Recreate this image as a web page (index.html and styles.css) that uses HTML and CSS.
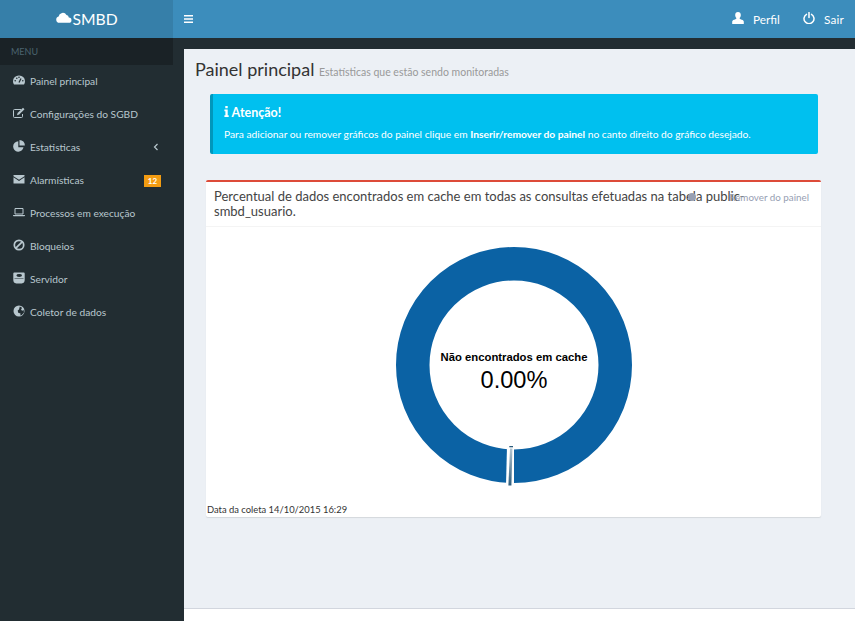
FILE: index.html
```html
<!DOCTYPE html>
<html lang="pt-BR">
<head>
    <meta charset="UTF-8">
    <meta name="viewport" content="width=device-width, initial-scale=1.0">
    <link rel="stylesheet" href="styles.css">
    <title>SMBD</title>
</head>
<body>
    <header class="topbar">
        <a class="logo">
            <svg class="logo-cloud" viewBox="0 0 16 10"><path d="M4 10a3 3 0 0 1-.6-5.900A4 4 0 0 1 10.800 2.600 2.800 2.800 0 0 1 13 5a2.500 2.500 0 0 1 0 5z" fill="#fff"/></svg>
            <span>SMBD</span>
        </a>
        <nav class="topnav">
            <svg class="burger" viewBox="0 0 10 8"><path d="M0 0h9v1.600H0zM0 3.200h9v1.600H0zM0 6.400h9V8H0z" fill="#fff"/></svg>
            <div class="topnav-right">
                <a class="toplink">
                    <svg viewBox="0 0 12 12"><path d="M6 0c1.800 0 2.800 1.300 2.800 3.100 0 1.200-.5 2.300-1.200 3 0 .7.300 1 1 1.200 1.600.5 3 1 3.200 2.200V12H.2v-2.500C.4 8.300 1.800 7.800 3.400 7.300c.7-.2 1-.5 1-1.200-.7-.7-1.200-1.800-1.200-3C3.200 1.300 4.200 0 6 0z" fill="#fff"/></svg>
                    Perfil
                </a>
                <a class="toplink">
                    <svg viewBox="0 0 12 12"><path d="M3.500 2.300a5 5 0 1 0 5 0M6 .5v5" fill="none" stroke="#fff" stroke-width="1.500" stroke-linecap="round"/></svg>
                    Sair
                </a>
            </div>
        </nav>
    </header>

    <div class="wrapper">
        <aside class="sidebar">
            <div class="sidebar-head">MENU</div>
            <ul class="menu">
                <li>
                    <svg viewBox="0 0 12 12"><path d="M6 1.500a5.800 5.800 0 0 0-6 5.700c0 1.200.3 2.200 1 3.300h10c.7-1.100 1-2.100 1-3.300a5.800 5.800 0 0 0-6-5.700z" fill="#b8c7ce"/><path d="M6 8.500 8 4.500" stroke="#222d32" stroke-width="1.200"/><circle cx="2.200" cy="6.800" r=".8" fill="#222d32"/><circle cx="3.800" cy="4.200" r=".8" fill="#222d32"/><circle cx="6" cy="3.300" r=".8" fill="#222d32"/><circle cx="9.800" cy="6.800" r=".8" fill="#222d32"/></svg>
                    Painel principal
                </li>
                <li>
                    <svg viewBox="0 0 12 12"><path d="M8 2.500H1.500a1 1 0 0 0-1 1v6a1 1 0 0 0 1 1h7a1 1 0 0 0 1-1V7" fill="none" stroke="#b8c7ce" stroke-width="1"/><path d="M4 8.200 4.600 6 10 .8l1.500 1.500L6.200 7.600z" fill="#b8c7ce"/></svg>
                    Configurações do SGBD
                </li>
                <li class="has-arrow">
                    <svg viewBox="0 0 12 12"><path d="M5.300 1.300a5.200 5.200 0 1 0 5.200 5.900H5.300z" fill="#b8c7ce"/><path d="M6.500 0a5.400 5.400 0 0 1 5.400 5.500H6.500z" fill="#b8c7ce"/></svg>
                    Estatisticas
                    <svg class="arrow" viewBox="0 0 6 8"><path d="M4.500 1 1.500 4l3 3" fill="none" stroke="#b8c7ce" stroke-width="1.200"/></svg>
                </li>
                <li class="has-badge">
                    <svg viewBox="0 0 12 12"><path d="M.5 2h11v1.200L6 6.800.5 3.200z" fill="#b8c7ce"/><path d="M.5 4.300 6 8l5.500-3.700V10.500H.5z" fill="#b8c7ce"/></svg>
                    Alarmísticas
                    <span class="badge">12</span>
                </li>
                <li>
                    <svg viewBox="0 0 12 12"><path d="M2 2.500h8v5.500H2z" fill="none" stroke="#b8c7ce" stroke-width="1"/><path d="M0 9h12v.6l-.6.6H.6L0 9.600z" fill="#b8c7ce"/></svg>
                    Processos em execução
                </li>
                <li>
                    <svg viewBox="0 0 12 12"><circle cx="6" cy="6" r="4.700" fill="none" stroke="#b8c7ce" stroke-width="1.700"/><path d="M2.800 9.200 9.200 2.800" stroke="#b8c7ce" stroke-width="1.700"/></svg>
                    Bloqueios
                </li>
                <li>
                    <svg viewBox="0 0 12 12"><path d="M1.300.5h9.400a1 1 0 0 1 1 1v6.500a3.500 3.500 0 0 1-3 3.500H3.300a3.500 3.500 0 0 1-3-3.500V1.500a1 1 0 0 1 1-1z" fill="#b8c7ce"/><ellipse cx="6.200" cy="3.500" rx="2.800" ry="1.400" fill="#222d32"/><path d="M1.500 6.500h9" stroke="#222d32" stroke-width=".5"/></svg>
                    Servidor
                </li>
                <li>
                    <svg viewBox="0 0 12 12"><circle cx="6" cy="6" r="5.500" fill="#b8c7ce"/><path d="M6.800 1.500 9 2.700 8 5 9.800 5.700 10.600 4.800 11 7.500 8.800 10 7.300 10.500 7.500 8.500 5.200 7.800 4.700 5.500 6 4.500z" fill="#222d32"/></svg>
                    Coletor de dados
                </li>
            </ul>
        </aside>

        <div class="main">
            <section class="content">
                <h1 class="page-title">Painel principal <small>Estatísticas que estão sendo monitoradas</small></h1>

                <div class="alert">
                    <h4><svg viewBox="0 0 5 11"><path d="M1.300 0h2.400v2.200H1.300zM.4 3.500h3.300v5.700h1V11H.4V9.200h1V5.300h-1z" fill="#fff"/></svg> Atenção!</h4>
                    <p>Para adicionar ou remover gráficos do painel clique em <b>Inserir/remover do painel</b> no canto direito do gráfico desejado.</p>
                </div>

                <div class="box">
                    <div class="box-header">
                        <h3>Percentual de dados encontrados em cache em todas as consultas efetuadas na tabela public-smbd_usuario.</h3>
                        <a class="box-tool"><span class="tool-icon"></span>Remover do painel</a>
                    </div>
                    <div class="box-body">
                        <svg class="donut" viewBox="0 0 240 240">
                            <defs>
                                <linearGradient id="sliver" x1="0" y1="0" x2="0" y2="1">
                                    <stop offset="0" stop-color="#b5c6d2"/>
                                    <stop offset="1" stop-color="#2c5c7c"/>
                                </linearGradient>
                            </defs>
                            <circle cx="120" cy="119" r="101.250" fill="none" stroke="#0b62a4" stroke-width="33.500"/>
                            <path d="M113 200 120 200 120 239 112 239z" fill="#fff"/>
                            <path d="M116 202.500h2.400l-1 37h-3z" fill="url(#sliver)"/>
                            <path d="M115.300 200h3.700v1.300h-3.700z" fill="#2c5c7c"/>
                            <text class="donut-label" x="120" y="114.500" text-anchor="middle">Não encontrados em cache</text>
                            <text class="donut-value" x="120" y="142" text-anchor="middle">0.00%</text>
                        </svg>
                    </div>
                    <div class="box-foot">Data da coleta 14/10/2015 16:29</div>
                </div>
            </section>
            <footer class="footer"></footer>
        </div>
    </div>
</body>
</html>
```

FILE: styles.css
```css
* {
    box-sizing: border-box;
}

html, body {
    height: 100%;
}

body {
    margin: 0;
    overflow: hidden;
    font-family: "Lato", "Open Sans", sans-serif;
    background-color: #222d32;
    color: #333;
    display: flex;
    flex-direction: column;
}

/* top bar */
.topbar {
    display: flex;
    height: 38px;
    flex-shrink: 0;
    background-color: #3c8dbc;
}

.logo {
    width: 173px;
    background-color: #367fa9;
    display: flex;
    align-items: center;
    justify-content: center;
    color: #fff;
    font-size: 15.700px;
}

.logo-cloud {
    width: 17px;
    height: 11px;
    margin-top: -3px;
}

.topnav {
    flex: 1;
    display: flex;
    align-items: center;
    padding: 0 11px;
}

.burger {
    width: 10px;
    height: 8px;
}

.topnav-right {
    margin-left: auto;
    display: flex;
    gap: 23px;
}

.toplink {
    display: flex;
    align-items: center;
    gap: 9px;
    color: #fff;
    font-size: 11.800px;
}

.toplink:last-child {
    gap: 9px;
    letter-spacing: 0.200px;
}

.toplink svg {
    width: 12px;
    height: 12px;
    margin-top: -2px;
}

/* sidebar */
.wrapper {
    flex: 1;
    display: flex;
    min-height: 0;
}

.sidebar {
    width: 184px;
    flex-shrink: 0;
}

.sidebar-head {
    width: 173px;
    height: 27px;
    line-height: 27px;
    padding-left: 11px;
    font-size: 9px;
    color: #4b646f;
    background-color: #1a2226;
}

.menu {
    list-style: none;
    margin: 0;
    padding: 0;
    width: 173px;
}

.menu li {
    height: 33px;
    display: flex;
    align-items: center;
    padding: 0 0 1px 13px;
    font-size: 10.200px;
    color: #b8c7ce;
}

.menu li > svg:first-child {
    width: 12px;
    height: 12px;
    margin-right: 5px;
    margin-top: -2px;
}

.arrow {
    width: 6px;
    height: 8px;
    margin-left: auto;
    margin-right: 14px;
}

.badge {
    margin: 1px 12px 0 auto;
    width: 17px;
    height: 12px;
    background-color: #f39c12;
    color: #fff;
    font-size: 8px;
    font-weight: bold;
    line-height: 12px;
    text-align: center;
}

/* main column */
.main {
    flex: 1;
    min-width: 0;
    display: flex;
    flex-direction: column;
    padding-top: 11px;
}

.content {
    flex: 1;
    background-color: #ecf0f5;
    padding: 9px 34px 0 11px;
}

.page-title {
    margin: 0;
    font-size: 18px;
    font-weight: 400;
    line-height: 22px;
    color: #333;
}

.page-title small {
    font-size: 10.500px;
    color: #999;
}

.alert {
    margin: 11px 0 0 15px;
    width: 608px;
    height: 60px;
    padding: 10px 11px;
    background-color: #00c0ef;
    border-left: 3px solid #0097bc;
    border-radius: 2px;
    color: #fff;
}

.alert h4 {
    margin: 0;
    font-size: 12.500px;
    font-weight: 700;
    line-height: 17px;
}

.alert h4 svg {
    width: 5px;
    height: 11px;
}

.alert p {
    margin: 7px 0 0;
    font-size: 10.240px;
    line-height: 13px;
}

.box {
    position: relative;
    margin: 26px 0 0 11px;
    width: 615px;
    height: 337px;
    background-color: #fff;
    border-top: 2px solid #dd4b39;
    border-radius: 2px;
    box-shadow: 0 1px 1px rgba(0, 0, 0, 0.1);
}

.box-header {
    position: relative;
    height: 45px;
    padding: 7px 8px;
    border-bottom: 1px solid #f4f4f4;
}

.box-header h3 {
    margin: 0;
    font-size: 13px;
    font-weight: 400;
    line-height: 15px;
    color: #444;
}

.box-tool {
    position: absolute;
    top: 9px;
    right: 12px;
    display: flex;
    align-items: center;
    font-size: 9.800px;
    color: #97a0b3;
}

.tool-icon {
    width: 8px;
    height: 8px;
    margin-right: 33px;
    border-radius: 50%;
    background-color: #97a0b3;
}

.box-body {
    display: flex;
    justify-content: center;
}

.donut {
    display: block;
    width: 240px;
    height: 240px;
    margin: 19px 0 0 1px;
}

.donut-label {
    font-family: "Liberation Sans", sans-serif;
    font-size: 11.300px;
    font-weight: bold;
    fill: #000;
}

.donut-value {
    font-family: "Liberation Sans", sans-serif;
    font-size: 23.600px;
    fill: #000;
}

.box-foot {
    position: absolute;
    left: 1px;
    bottom: 2px;
    font-size: 9.400px;
    color: #333;
}

.footer {
    height: 13px;
    flex-shrink: 0;
    background-color: #fff;
    border-top: 1px solid #d2d6de;
}
```
